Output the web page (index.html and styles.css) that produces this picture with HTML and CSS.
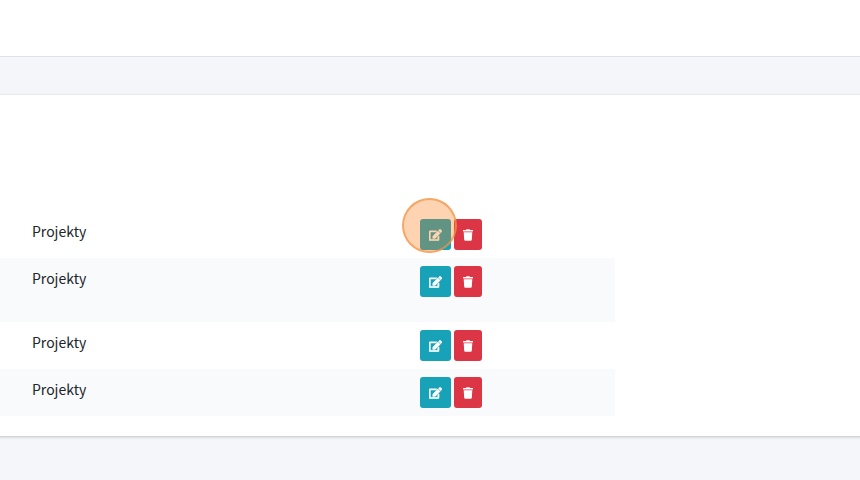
FILE: index.html
```
<!DOCTYPE html>
<html lang="pl">
<head>
  <meta charset="UTF-8" />
  <meta name="viewport" content="width=device-width, initial-scale=1.0"/>
  <title>Projekty</title>
  <link rel="stylesheet" href="styles.css">
</head>
<body>

  <svg class="sprite" aria-hidden="true">
    <symbol id="icon-edit" viewBox="0 0 576 512">
      <path d="M402.6 83.2l90.2 90.2c3.8 3.8 3.8 10 0 13.800L274.400 405.600l-92.800 10.300c-12.400 1.400-22.900-9.100-21.500-21.500l10.300-92.800L388.800 83.200c3.800-3.800 10-3.800 13.800 0zm162-22.900l-48.800-48.800c-15.200-15.200-39.900-15.200-55.200 0l-35.400 35.400c-3.800 3.800-3.800 10 0 13.800l90.200 90.200c3.800 3.800 10 3.800 13.800 0l35.400-35.400c15.200-15.300 15.200-40 0-55.200zM384 346.200V448H64V128h229.800c3.200 0 6.200-1.300 8.500-3.500l40-40c7.600-7.600 2.200-20.500-8.500-20.500H48C21.500 64 0 85.500 0 112v352c0 26.500 21.500 48 48 48h352c26.500 0 48-21.500 48-48V306.200c0-10.700-12.900-16-20.500-8.500l-40 40c-2.200 2.300-3.500 5.300-3.500 8.500z"/>
    </symbol>
    <symbol id="icon-trash" viewBox="0 0 448 512">
      <path d="M432 32H312l-9.400-18.700A24 24 0 0 0 281.100 0H166.800a23.700 23.700 0 0 0-21.400 13.300L136 32H16A16 16 0 0 0 0 48v32a16 16 0 0 0 16 16h416a16 16 0 0 0 16-16V48a16 16 0 0 0-16-16zM53.200 467a48 48 0 0 0 47.900 45h245.800a48 48 0 0 0 47.900-45L416 128H32z"/>
    </symbol>
  </svg>

  <header class="topbar"></header>

  <main class="content">
    <div class="card">
      <table class="table">
        <tbody>
          <tr>
            <td class="type">Projekty</td>
            <td class="actions">
              <div class="btn-row">
                <button class="btn btn-info" aria-label="Edytuj"><svg class="edit"><use href="#icon-edit"/></svg></button>
                <button class="btn btn-danger" aria-label="Usuń"><svg class="trash"><use href="#icon-trash"/></svg></button>
                <span class="click-mark"></span>
              </div>
            </td>
          </tr>
          <tr class="tall">
            <td class="type">Projekty</td>
            <td class="actions">
              <div class="btn-row">
                <button class="btn btn-info" aria-label="Edytuj"><svg class="edit"><use href="#icon-edit"/></svg></button>
                <button class="btn btn-danger" aria-label="Usuń"><svg class="trash"><use href="#icon-trash"/></svg></button>
              </div>
            </td>
          </tr>
          <tr>
            <td class="type">Projekty</td>
            <td class="actions">
              <div class="btn-row">
                <button class="btn btn-info" aria-label="Edytuj"><svg class="edit"><use href="#icon-edit"/></svg></button>
                <button class="btn btn-danger" aria-label="Usuń"><svg class="trash"><use href="#icon-trash"/></svg></button>
              </div>
            </td>
          </tr>
          <tr>
            <td class="type">Projekty</td>
            <td class="actions">
              <div class="btn-row">
                <button class="btn btn-info" aria-label="Edytuj"><svg class="edit"><use href="#icon-edit"/></svg></button>
                <button class="btn btn-danger" aria-label="Usuń"><svg class="trash"><use href="#icon-trash"/></svg></button>
              </div>
            </td>
          </tr>
        </tbody>
      </table>
    </div>
  </main>

</body>
</html>
```
FILE: styles.css
```
* { box-sizing: border-box; }
body {
  margin: 0;
  font-family: "Noto Sans CJK JP", "Noto Sans", sans-serif;
  font-size: 14px;
  line-height: 24px;
  color: #212529;
  background: #f4f6f9;
}
.sprite {
  display: none;
}
.topbar {
  height: 57px;
  background: #fff;
  border-bottom: 1px solid #dee2e6;
}
.content {
  padding: 38px 0 44px;
  overflow: hidden;
}
.card {
  margin: 0 -8px;
  padding: 116px 8px 20px;
  background: #fff;
  box-shadow: 0 0 1px rgba(0,0,0,0.13), 0 1px 3px rgba(0,0,0,0.2);
}
.table {
  width: 615px;
  max-width: 100%;
  border-collapse: collapse;
}
.table tr {
  height: 47px;
}
.table tr.tall {
  height: 64px;
}
.table tr:nth-child(even) {
  background: #f8fafc;
}
.table td {
  padding: 8px;
  vertical-align: top;
}
.table .type {
  width: 67%;
  padding-left: 32px;
}
.btn-row {
  position: relative;
  display: flex;
  gap: 3px;
}
.btn {
  display: flex;
  align-items: center;
  height: 31px;
  padding: 0 8px;
  border: 1px solid transparent;
  border-radius: 3px;
  color: #fff;
  cursor: pointer;
}
.btn svg {
  height: 12px;
  fill: currentColor;
}
.btn .edit {
  width: 13px;
  stroke: currentColor;
  stroke-width: 18;
}
.btn .trash {
  width: 10px;
}
.btn-info {
  background: #17a2b8;
}
.btn-danger {
  background: #dc3545;
}
/* click highlight */
.click-mark {
  position: absolute;
  top: -21px;
  left: -18px;
  width: 55px;
  height: 55px;
  border: 2px solid rgba(243,147,68,0.7);
  border-radius: 50%;
  background: rgba(248,120,20,0.33);
  pointer-events: none;
}
```
